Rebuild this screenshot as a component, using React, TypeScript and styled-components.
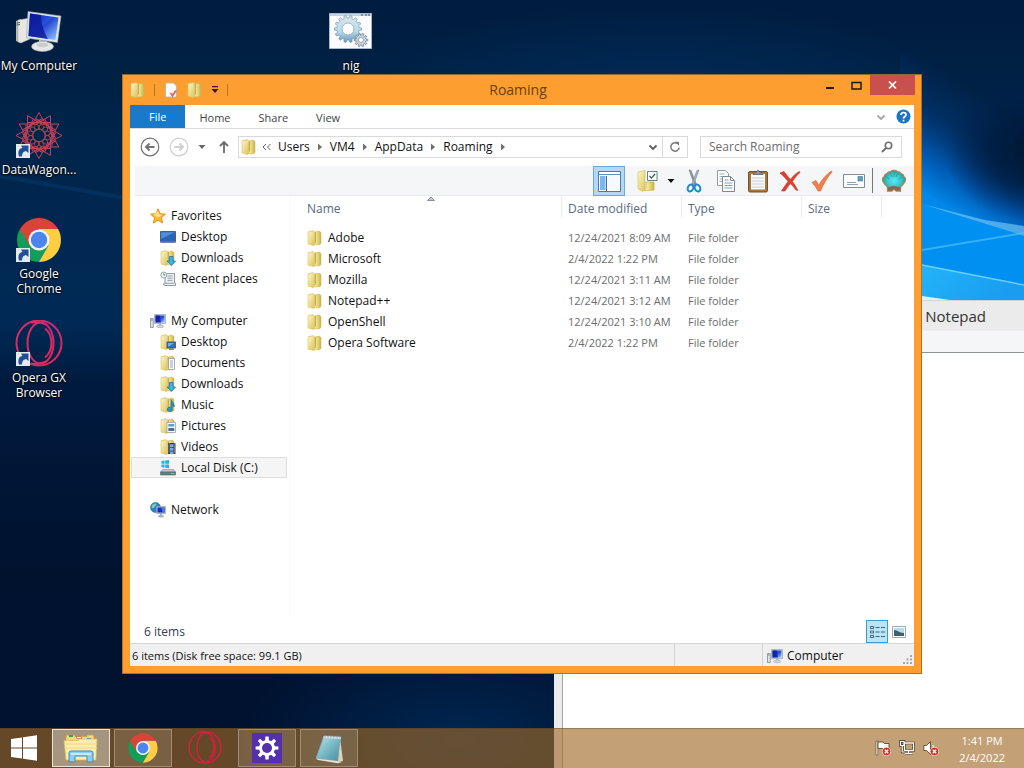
import React from "react";
import styled, { createGlobalStyle, css } from "styled-components";

const GlobalStyle = createGlobalStyle`
  *, *::before, *::after { box-sizing: border-box; }
  html, body, #root { height: 100%; }
  body {
    margin: 0;
    overflow: hidden;
    font-family: "Open Sans", "Noto Sans", sans-serif;
    font-size: 12px;
    line-height: 16px;
    color: #111;
  }
  button, input {
    font: inherit;
    color: inherit;
    border: 0;
    padding: 0;
    margin: 0;
    background: none;
  }
  svg { display: block; flex: none; }
  a { color: inherit; text-decoration: none; }
  ul, ol { list-style: none; margin: 0; padding: 0; }
`;

/* ---------- desktop ---------- */

const Desktop = styled.div`
  position: relative;
  display: flex;
  flex-direction: column;
  justify-content: space-between;
  min-height: 100vh;
  overflow: hidden;
  background: #00183a;
`;

const WallpaperSvg = styled.svg`
  position: absolute;
  inset: 0;
  width: 100%;
  height: 100%;
`;

const IconGrid = styled.ul`
  position: relative;
  display: grid;
  grid-template-columns: repeat(5, 78px);
  grid-auto-rows: 104px;
`;

const Shortcut = styled.li<{ $column: number }>`
  grid-column: ${(p) => p.$column};
  a {
    display: flex;
    flex-direction: column;
    align-items: center;
    gap: 2px;
    padding-top: 8px;
    color: #fff;
    line-height: 15px;
    text-align: center;
    text-shadow: 0 1px 2px #000, 0 0 2px #000;
  }
`;

/* ---------- window frames ---------- */

const NotepadWindow = styled.section`
  position: absolute;
  left: 554px;
  right: 0;
  top: 300px;
  bottom: 0;
  display: flex;
  flex-direction: column;
  background: #ebebeb;
  border-top: 1px solid #cfd6da;
  padding-left: 8px;
`;

const NotepadTitle = styled.header`
  display: flex;
  justify-content: flex-end;
  padding: 5px 38px 5px 0;
  font-size: 15px;
  line-height: 20px;
  color: #333;
`;

const NotepadMenu = styled.div`
  height: 22px;
  background: #f5f6f7;
  border-bottom: 1px solid #8d9298;
`;

const NotepadPage = styled.div`
  flex: 1;
  background: #fff;
  border-left: 1px solid #a5a5a5;
`;

const ExplorerWindow = styled.section`
  position: absolute;
  left: 122px;
  right: 102px;
  top: 74px;
  bottom: 94px;
  display: flex;
  flex-direction: column;
  padding: 0 7px 7px;
  border: 1px solid #b5701c;
  border-top-color: #8c6a3a;
  background: #fc9f30;
`;

const TitleBar = styled.header`
  position: relative;
  display: flex;
  justify-content: space-between;
  height: 30px;
  flex: none;
`;

const QuickAccess = styled.div`
  display: flex;
  align-items: center;
  gap: 8px;
`;

const QuickDivider = styled.span`
  width: 1px;
  height: 12px;
  background: #b87428;
`;

const IconButton = styled.button`
  display: flex;
  align-items: center;
  justify-content: center;
`;

const WindowTitle = styled.h1`
  position: absolute;
  inset: 0;
  margin: 0;
  padding: 5px 8px 5px 0;
  font-size: 14px;
  font-weight: 400;
  line-height: 20px;
  text-align: center;
  color: #6a3e10;
`;

const Caption = styled.div`
  position: relative;
  display: flex;
  align-items: flex-start;
  margin-right: -1px;
`;

const CaptionButton = styled.button<{ $close?: boolean }>`
  display: flex;
  align-items: center;
  justify-content: center;
  width: ${(p) => (p.$close ? 45 : 27)}px;
  height: 20px;
  background: ${(p) => (p.$close ? "#c9504e" : "transparent")};
`;

const Client = styled.div`
  display: flex;
  flex-direction: column;
  flex: 1;
  min-height: 0;
  background: #fff;
`;

/* ---------- ribbon, address, toolbar ---------- */

const TabRow = styled.nav`
  display: flex;
  align-items: stretch;
  height: 24px;
  border-bottom: 1px solid #dadbdc;
`;

const Tab = styled.button<{ $file?: boolean }>`
  padding: 2px 14px 0;
  font-size: 11px;
  color: #444;
  ${(p) =>
    p.$file &&
    css`
      padding: 0 19px;
      color: #fff;
      background: #1979ca;
    `}
`;

const TabTools = styled.div`
  display: flex;
  align-items: center;
  gap: 10px;
  margin-left: auto;
  padding-right: 3px;
`;

const AddressRow = styled.div`
  display: flex;
  align-items: center;
  gap: 12px;
  padding: 7px 12px 8px 10px;
`;

const NavButtons = styled.div`
  display: flex;
  align-items: center;
  gap: 9px;
`;

const AddressBox = styled.div`
  display: flex;
  align-items: center;
  flex: 1;
  height: 22px;
  min-width: 0;
  margin-left: -4px;
  padding-left: 2px;
  border: 1px solid #d9d9d9;
`;

const Crumbs = styled.ol`
  display: flex;
  align-items: center;
  flex: 1;
  padding-left: 5px;
  white-space: nowrap;
  li {
    display: flex;
    align-items: center;
  }
`;

const CrumbArrow = styled.span`
  display: flex;
  justify-content: center;
  width: 20px;
`;

const AddressButton = styled(IconButton)<{ $divided?: boolean }>`
  width: ${(p) => (p.$divided ? 25 : 18)}px;
  height: 20px;
  border-left: ${(p) => (p.$divided ? "1px solid #d9d9d9" : "0")};
`;

const SearchBox = styled.label`
  display: flex;
  align-items: center;
  width: 202px;
  height: 22px;
  padding: 0 8px;
  border: 1px solid #d9d9d9;
  input {
    flex: 1;
    min-width: 0;
    outline: 0;
  }
  input::placeholder {
    color: #6d6d6d;
    opacity: 1;
  }
`;

const Toolbar = styled.div`
  display: flex;
  align-items: center;
  justify-content: flex-end;
  height: 30px;
  flex: none;
  margin-left: 5px;
  padding-right: 4px;
  background: #f5f6f7;
  border-bottom: 1px solid #e8eaec;
`;

const ToolButton = styled(IconButton)<{ $active?: boolean; $narrow?: boolean }>`
  width: ${(p) => (p.$narrow ? 14 : 32)}px;
  height: 30px;
  ${(p) =>
    p.$active &&
    css`
      margin-right: 7px;
      background: #b5d6f5;
      border: 1px solid #6ba6dc;
    `}
`;

const ToolDivider = styled.span`
  width: 1px;
  height: 25px;
  margin: 0 5px 0 2px;
  background: #777;
`;

/* ---------- body ---------- */

const Body = styled.div`
  display: flex;
  flex: 1;
  min-height: 0;
`;

const Tree = styled.nav`
  width: 161px;
  flex: none;
  display: flex;
  flex-direction: column;
  gap: 21px;
  padding: 9px 3px 0 1px;
  border-right: 1px solid #fbfbfb;
`;

const TreeLink = styled.a<{ $root?: boolean; $selected?: boolean }>`
  display: flex;
  align-items: center;
  gap: 5px;
  height: 21px;
  padding-left: ${(p) => (p.$root ? 18 : 28)}px;
  border: 1px solid ${(p) => (p.$selected ? "#dedede" : "transparent")};
  background: ${(p) => (p.$selected ? "#f5f5f5" : "transparent")};
`;

const FilePane = styled.div`
  position: relative;
  flex: 1;
  min-width: 0;
  padding-left: 10px;
  overflow: hidden;
`;

const FileTable = styled.table`
  table-layout: fixed;
  border-collapse: separate;
  border-spacing: 0;
  width: 581px;
  th, td {
    padding: 0 6px;
    font-weight: 400;
    text-align: left;
    white-space: nowrap;
  }
  th {
    height: 22px;
    padding-top: 4px;
    border-right: 1px solid #e8edf3;
    color: #5a6a80;
  }
  td {
    height: 21px;
    font-size: 11px;
    color: #6d6d6d;
  }
  tbody tr:first-child td {
    height: 30px;
    padding-top: 9px;
  }
`;

const FileName = styled.a`
  display: flex;
  align-items: center;
  gap: 5px;
  font-size: 12px;
  color: #111;
`;

const SortMark = styled.span`
  position: absolute;
  left: 136px;
  top: 0;
`;

const DetailsRow = styled.div`
  display: flex;
  align-items: center;
  height: 23px;
  flex: none;
  padding: 0 4px 0 14px;
  color: #333f50;
`;

const ViewButtons = styled.div`
  display: flex;
  align-items: center;
  margin-left: auto;
`;

const ViewButton = styled(IconButton)<{ $active?: boolean }>`
  width: 22px;
  height: 23px;
  background: ${(p) => (p.$active ? "#b9e5f7" : "transparent")};
  border: 1px solid ${(p) => (p.$active ? "#3f9cc4" : "transparent")};
`;

const StatusBar = styled.footer`
  display: flex;
  align-items: stretch;
  height: 23px;
  flex: none;
  background: #f0f0f0;
  border-top: 1px solid #d7d7d7;
`;

const StatusCell = styled.div<{ $width?: number }>`
  display: flex;
  align-items: center;
  gap: 4px;
  padding: 2px 0 0 2px;
  font-size: 11px;
  flex: ${(p) => (p.$width ? `0 0 ${p.$width}px` : "1")};
  border-left: ${(p) => (p.$width ? "1px solid #d4d4d4" : "0")};
  white-space: nowrap;
`;

const PlaceCell = styled(StatusCell)`
  padding-left: 4px;
  font-size: 12px;
  > :last-child {
    margin-left: auto;
    align-self: flex-end;
  }
`;

/* ---------- taskbar ---------- */

const Taskbar = styled.footer`
  position: relative;
  display: flex;
  align-items: stretch;
  gap: 4px;
  height: 40px;
  padding: 0 19px 1px 0;
  background: rgba(160, 105, 36, 0.63);
  border-top: 1px solid rgba(80, 55, 25, 0.35);
`;

const StartButton = styled(IconButton)`
  width: 48px;
`;

const TaskButton = styled(IconButton)<{ $state?: "open" | "active" }>`
  width: 58px;
  border: 1px solid
    ${(p) => (p.$state === "active" ? "#eee5da" : p.$state ? "#a08c72" : "transparent")};
  background: ${(p) =>
    p.$state === "active"
      ? "linear-gradient(#a39480, #a8967f)"
      : p.$state
        ? "rgba(255, 245, 230, 0.14)"
        : "transparent"};
`;

const Tray = styled.div`
  display: flex;
  align-items: center;
  gap: 8px;
  margin-left: auto;
`;

const Clock = styled.time`
  margin-left: 12px;
  padding-top: 1px;
  font-size: 11px;
  color: #fff;
  text-align: center;
  line-height: 17px;
`;

/* ---------- drawings ---------- */

const Wallpaper = () => (
  <WallpaperSvg viewBox="0 0 1024 768" preserveAspectRatio="none" aria-hidden="true">
    <defs>
      <linearGradient id="night" x1="0" y1="0" x2="0" y2="1">
        <stop offset="0" stopColor="#001c3e" />
        <stop offset=".2" stopColor="#00254c" />
        <stop offset=".42" stopColor="#002a56" />
        <stop offset=".5" stopColor="#001a3e" />
        <stop offset=".75" stopColor="#00122e" />
        <stop offset="1" stopColor="#001230" />
      </linearGradient>
      <linearGradient id="beam" gradientUnits="userSpaceOnUse" x1="932" y1="64" x2="871" y2="159">
        <stop offset="0" stopColor="#003a7c" stopOpacity="0" />
        <stop offset=".35" stopColor="#003f86" stopOpacity=".4" />
        <stop offset=".7" stopColor="#0060c0" stopOpacity=".85" />
        <stop offset="1" stopColor="#0088ea" />
      </linearGradient>
      <radialGradient id="glow">
        <stop offset="0" stopColor="#00386e" stopOpacity=".55" />
        <stop offset="1" stopColor="#00386e" stopOpacity="0" />
      </radialGradient>
      <radialGradient id="shade">
        <stop offset="0" stopColor="#001632" />
        <stop offset=".5" stopColor="#001c40" stopOpacity=".8" />
        <stop offset="1" stopColor="#002050" stopOpacity="0" />
      </radialGradient>
      <linearGradient id="pale" x1="0" y1="0" x2="1" y2=".3">
        <stop offset="0" stopColor="#22b4f8" />
        <stop offset="1" stopColor="#1a9cf0" />
      </linearGradient>
      <linearGradient id="folderBack" x1="0" y1="0" x2="1" y2="0">
        <stop offset="0" stopColor="#faf4bc" />
        <stop offset=".5" stopColor="#ecdf86" />
        <stop offset="1" stopColor="#ccb24a" />
      </linearGradient>
      <linearGradient id="folderFront" x1="0" y1="0" x2="1" y2="1">
        <stop offset="0" stopColor="#fdf8cc" />
        <stop offset="1" stopColor="#dcc258" />
      </linearGradient>
      <linearGradient id="screen" x1="0" y1="0" x2="1" y2="1">
        <stop offset="0" stopColor="#0b1fa8" />
        <stop offset=".45" stopColor="#2a50dc" />
        <stop offset=".5" stopColor="#2448d0" />
        <stop offset="1" stopColor="#9cd0ff" />
      </linearGradient>
      <linearGradient id="operaRing" x1="0" y1="0" x2="1" y2="1">
        <stop offset="0" stopColor="#e8285c" />
        <stop offset=".5" stopColor="#c82c74" />
        <stop offset="1" stopColor="#f02450" />
      </linearGradient>
      <radialGradient id="shell">
        <stop offset="0" stopColor="#58ecec" />
        <stop offset=".6" stopColor="#38c8d0" />
        <stop offset="1" stopColor="#2a9c98" />
      </radialGradient>
      <linearGradient id="gearFill" x1="0" y1="0" x2="0" y2="1">
        <stop offset="0" stopColor="#dde6ee" />
        <stop offset=".6" stopColor="#b4dcea" />
        <stop offset="1" stopColor="#6a93c0" />
      </linearGradient>
      <linearGradient id="pad" x1="0" y1="0" x2="1" y2="1">
        <stop offset="0" stopColor="#b8e6ec" />
        <stop offset="1" stopColor="#3f8ca0" />
      </linearGradient>
    </defs>
    <rect width="1024" height="768" fill="url(#night)" />
    <ellipse cx="660" cy="110" rx="320" ry="110" fill="url(#glow)" />
    <ellipse cx="460" cy="740" rx="220" ry="110" fill="url(#glow)" />
    <path d="M0 176L124 198" stroke="#0a4278" strokeWidth="4" opacity=".35" />
    <path d="M900 0H1024V300H900Z" fill="url(#beam)" />
    <ellipse cx="1034" cy="150" rx="90" ry="72" fill="url(#shade)" />
    <path d="M900 198L922 204L1024 236V300H900Z" fill="#0090f2" />
    <path d="M922 204L1024 236V226L985 220Z" fill="#7fd0fb" opacity=".6" />
    <path d="M922 250L1024 233" stroke="#4cc0fa" strokeWidth="2" opacity=".7" />
    <path d="M922 265L1024 285V300H922Z" fill="url(#pale)" />
    <path d="M922 265L1024 285" stroke="#6cd0fb" strokeWidth="1.5" />
    <path d="M922 296L950 300H922Z" fill="#d8f4ff" />
  </WallpaperSvg>
);

const FolderShape = () => (
  <>
    <path d="M1.5 1.5L6 .8L7 2H12.5V14H1.5Z" fill="url(#folderBack)" stroke="#dcc873" strokeWidth=".6" />
    <path d="M8.5 2L12 1L14 2.5V13.5L12.5 14.8H5.5L8.5 12.5Z" fill="url(#folderBack)" stroke="#c8b052" strokeWidth=".5" />
    <path d="M7.5 2.8L9 2V12L7.5 13Z" fill="#a8943c" opacity=".5" />
    <path d="M1 2L6.5 .8L7.5 2V14.5L6.5 15.5L1 14Z" fill="url(#folderFront)" stroke="#dcc867" strokeWidth=".6" />
  </>
);

type Badge = "arrow" | "screen" | "doc" | "note" | "photo" | "film";

const Folder = ({ badge }: { badge?: Badge }) => (
  <svg width="16" height="16" viewBox="0 0 16 16" aria-hidden="true">
    <FolderShape />
    {badge === "arrow" && (
      <path d="M9.5 6.5h3.5v4.5h2.5l-4.2 4.5-4.2-4.5h2.4z" fill="#3fb4e0" stroke="#1878ac" strokeWidth=".8" />
    )}
    {badge === "screen" && (
      <>
        <rect x="7" y="8" width="8.5" height="6" fill="#2d70c0" stroke="#38506c" strokeWidth=".8" />
        <path d="M8 9h6l-6 4z" fill="#6cb0ea" />
        <path d="M9 15.3h5" stroke="#5d6c7c" />
      </>
    )}
    {badge === "doc" && (
      <>
        <path d="M8.5 3.5h6v11h-6z" fill="#fff" stroke="#9298a4" strokeWidth=".8" />
        <path d="M10 6h3M10 8h3M10 10h3M10 12h3" stroke="#7480b0" strokeWidth=".8" />
      </>
    )}
    {badge === "note" && (
      <path d="M11 2.5c.6 2.3 3.8 3.4 3.2 7.5-.6-1.800-1.200-2.200-1.800-2.600v5a2.600 2.200 0 1 1-1.600-2z" fill="#2b96cc" stroke="#176494" strokeWidth=".6" />
    )}
    {badge === "photo" && (
      <>
        <path d="M7 4.5h8.5v10H7z" fill="#fff" stroke="#98a2ac" strokeWidth=".8" />
        <path d="M8.3 6h6v2.6h-6z" fill="#5aa4d4" />
        <path d="M8.3 10h6v3h-6z" fill="#4c7290" />
      </>
    )}
    {badge === "film" && (
      <>
        <path d="M8 4h7.5v11H8z" fill="#333c52" />
        <path d="M10 5.2h3.5v3H10zM10 9h3.5v2.8H10zM10 12.6h3.5V15H10z" fill="#80a4dc" />
        <path d="M9 4.5v10M14.6 4.5v10" stroke="#e8ecf2" strokeWidth=".7" strokeDasharray="1 1" />
      </>
    )}
  </svg>
);

const SmallComputer = () => (
  <svg width="16" height="16" viewBox="0 0 16 16" aria-hidden="true">
    <path d="M.5 5.5h2.8v9H.5z" fill="#dfe3e6" stroke="#7c8a94" strokeWidth=".8" />
    <path d="M1.2 7h1.4" stroke="#5d7c50" />
    <path d="M4.5 1.5h11v9h-11z" fill="#d6dce4" stroke="#8a94a8" strokeWidth=".6" />
    <path d="M5.5 2.5h9v7h-9z" fill="url(#screen)" />
    <path d="M5.5 2.5h4l1.5 7H5.500z" fill="#101c9c" opacity=".8" />
    <path d="M9 10.5h2.4v2H9z" fill="#aeb4c2" />
    <ellipse cx="10.2" cy="13.4" rx="3.6" ry="1.3" fill="#d6dae2" stroke="#8c94a4" strokeWidth=".5" />
  </svg>
);

const Star = () => (
  <svg width="16" height="16" viewBox="0 0 16 16" aria-hidden="true">
    <path d="M8 .8l2.100 4.900 5.300.5-4 3.500 1.300 5.300L8 12.200 3.300 15l1.300-5.300-4-3.500 5.300-.5z" fill="#fdb92e" stroke="#e08516" strokeWidth=".9" />
    <path d="M8 3l1.400 3.500 3.200.3L8 9.5 3.600 7z" fill="#ffe08a" />
  </svg>
);

const DesktopIcon = () => (
  <svg width="16" height="16" viewBox="0 0 16 16" aria-hidden="true">
    <path d="M.5 2.5h15v10.5H.5z" fill="#2a64b4" stroke="#44566c" strokeWidth=".9" />
    <path d="M1.2 3.2h13.4L1.2 10z" fill="#4d90d8" />
    <path d="M.5 12h15v1.8H.5z" fill="#5a7890" />
  </svg>
);

const RecentIcon = () => (
  <svg width="16" height="16" viewBox="0 0 16 16" aria-hidden="true">
    <path d="M5 2.5h9.5v9.5h1v2.5H4.5L3 13h2z" fill="#eef0f2" stroke="#8a9299" strokeWidth=".9" />
    <path d="M7.5 5h5M7.5 7.2h5M7.5 9.4h5M5 12.2h9" stroke="#8a949e" strokeWidth=".9" />
    <circle cx="3.8" cy="4" r="3" fill="#eaf4f8" stroke="#93a0a8" strokeWidth=".9" />
    <path d="M3.8 2.2V4h1.5" stroke="#50606c" fill="none" strokeWidth=".8" />
  </svg>
);

const DriveIcon = () => (
  <svg width="16" height="16" viewBox="0 0 16 16" aria-hidden="true">
    <path d="M1.5 1l3-.4v3.2h-3zM5.2.5L9 0v3.8H5.2zM1.5 4.5h3v3.2l-3-.4zM5.2 4.5H9v3.8l-3.8-.5z" fill="#1fb4e4" />
    <path d="M2.5 9.5h11l2 2.5H.5z" fill="#c0ccce" stroke="#7b8b90" strokeWidth=".6" />
    <path d="M.5 12h15v3H.5z" fill="#5f8086" stroke="#45636a" strokeWidth=".6" />
    <path d="M11 13.5h3" stroke="#5ee07c" />
  </svg>
);

const NetworkIcon = () => (
  <svg width="16" height="16" viewBox="0 0 16 16" aria-hidden="true">
    <circle cx="5.5" cy="5.5" r="5" fill="#2c80cc" stroke="#1d5690" strokeWidth=".5" />
    <path d="M2 3.400c2-2.400 4-2 4.600-1.400-.2 2-2 1.600-2.300 3.500-1 .3-1.800 1-2.800.6z" fill="#7fd49c" />
    <path d="M6.500 4.5h9v7h-9z" fill="#d8dee8" stroke="#8690a4" strokeWidth=".6" />
    <path d="M7.4 5.4h7.2v5.2H7.4z" fill="#1630b4" />
    <path d="M11 5.400h3.600v5.200h-2z" fill="#4878e4" />
    <path d="M10 11.500h2v2h-2z" fill="#9ea6b8" />
    <ellipse cx="11" cy="14.2" rx="3" ry="1.2" fill="#9fb0c8" />
  </svg>
);

const LinkArrow = () => (
  <>
    <path d="M1 32h14v14H1z" fill="#e2ebf4" />
    <path d="M4 44.500C2.500 39.500 4 36.500 7.500 36L6 33.500H13.500V41L11 39C8 39.500 7 41.500 7 44.500Z" fill="#234f94" />
  </>
);

const BigComputer = () => (
  <svg width="48" height="48" viewBox="0 0 48 48" aria-hidden="true">
    <path d="M1 13L6 11V35L1 33Z" fill="#b8bab8" />
    <path d="M3 12L15 10V31L6 35L3 34Z" fill="#e8e8e2" stroke="#9c9e9e" strokeWidth=".5" />
    <path d="M1.500 15L5 14.500M1.500 17L5 16.500" stroke="#555c60" />
    <path d="M13 3.500L46 8L42.500 34.500L11.500 30Z" fill="#dfe4ea" stroke="#9aa4ae" strokeWidth=".6" />
    <path d="M15 5.500L43.500 9.500L40.500 32L13.500 28Z" fill="url(#screen)" />
    <path d="M15 5.500L26 7C26 15 29 24 33 31L13.500 28Z" fill="#0c1898" opacity=".8" />
    <path d="M24 32L32 33V38H24Z" fill="#c8ccd0" />
    <ellipse cx="27.500" cy="38.500" rx="11" ry="5" fill="#e6e8e6" stroke="#a4a8aa" strokeWidth=".6" />
    <ellipse cx="27.500" cy="37" rx="6" ry="2.200" fill="#c8cccc" />
  </svg>
);

const points = Array.from({ length: 12 }, (_, i) => i * 30);

const Spirograph = () => (
  <svg width="48" height="48" viewBox="0 0 48 48" aria-hidden="true">
    <g transform="translate(24 23.500)" fill="none" stroke="#c8405c">
      {points.map((a) => (
        <g key={a} transform={`rotate(${a})`}>
          <path d="M0 -23L8 -9M0 -23L-8 -9M-11 -13L11 -13" strokeWidth="1" />
          <path d="M0 -13C6 -11 6 -5 0 -6C-6 -5 -6 -11 0 -13" strokeWidth="1" stroke="#b04050" />
        </g>
      ))}
    </g>
    <LinkArrow />
  </svg>
);

const ChromeIcon = ({ size = 48, linked }: { size?: number; linked?: boolean }) => (
  <svg width={size} height={size} viewBox="0 0 48 48" aria-hidden="true">
    <path d="M24 24V13H43A22 22 0 0 1 24 46Z" fill="#fdce42" />
    <path d="M24 24L33.500 29.500L24 46A22 22 0 0 1 5 13Z" fill="#129d58" />
    <path d="M24 13H43.100A22 22 0 0 0 5 13L14.500 29.500Z" fill="#da4437" />
    <circle cx="24" cy="24" r="10.5" fill="#f4f4f4" />
    <circle cx="24" cy="24" r="8.2" fill="#4a86ee" />
    {linked && <LinkArrow />}
  </svg>
);

const OperaIcon = ({ size = 48, linked }: { size?: number; linked?: boolean }) => (
  <svg width={size} height={size} viewBox="0 0 48 48" aria-hidden="true">
    <g fill="none" stroke={linked ? "url(#operaRing)" : "#d41f3c"} strokeWidth="2">
      <circle cx="24" cy="23" r="22.5" />
      <ellipse cx="25.5" cy="23" rx="13" ry="20.5" />
      <path d="M30 8.500C38.500 15 38.500 31 30 37.500" />
      <path d="M16 2.500C21 1.500 25 1.500 31 4.500M16 43.500c5 1 9 1 15-2" />
    </g>
    {linked && <LinkArrow />}
  </svg>
);

const gearPath = (cx: number, cy: number, inner: number, outer: number, teeth: number) => {
  const step = (Math.PI * 2) / teeth;
  let d = "";
  for (let i = 0; i < teeth; i++) {
    [[-0.3, inner], [-0.18, outer], [0.18, outer], [0.3, inner]].forEach(([o, r], k) => {
      const a = (i + o) * step;
      d += `${i + k === 0 ? "M" : "L"}${(cx + Math.cos(a) * r).toFixed(2)} ${(cy + Math.sin(a) * r).toFixed(2)}`;
    });
  }
  return d + "Z";
};

const BatchIcon = () => (
  <svg width="48" height="48" viewBox="0 0 48 48" aria-hidden="true">
    <path d="M2.5 5.5h42v35h-42z" fill="#fafcfd" stroke="#a9b8cc" />
    <path d="M3 6h41v2H3z" fill="#c3d0e4" />
    <path d="M34 7h2M38 7h2M41 7h2" stroke="#42526c" />
    <path d={gearPath(21, 21, 11, 13.5, 14)} fill="url(#gearFill)" stroke="#7895ac" strokeWidth=".7" />
    <circle cx="21" cy="21" r="6" fill="#fff" stroke="#8ca4b4" strokeWidth=".8" />
    <path d={gearPath(34, 32, 5, 6.8, 10)} fill="#c8d2dc" stroke="#6c7c8c" strokeWidth=".7" />
    <circle cx="34" cy="32" r="2.5" fill="#fff" stroke="#7c8c9c" strokeWidth=".7" />
  </svg>
);

const BackArrow = ({ flip }: { flip?: boolean }) => (
  <svg width="20" height="20" viewBox="0 0 20 20" fill="none" stroke={flip ? "#cfcfcf" : "#727272"} aria-hidden="true">
    <circle cx="10" cy="10" r="8.8" strokeWidth="1.2" />
    <path d={flip ? "M5.500 10h8.500M10.500 6.500L14 10l-3.500 3.500" : "M14.500 10H6M9.500 6.500L6 10l3.500 3.500"} strokeWidth="1.9" />
  </svg>
);

const Caret = ({ color = "#666" }: { color?: string }) => (
  <svg width="8" height="8" viewBox="0 0 8 8" aria-hidden="true">
    <path d="M.5 2h7L4 6z" fill={color} />
  </svg>
);

const Chevron = ({ color }: { color: string }) => (
  <svg width="10" height="10" viewBox="0 0 10 10" fill="none" stroke={color} strokeWidth="1.8" aria-hidden="true">
    <path d="M1.500 3.500L5 7L8.500 3.500" />
  </svg>
);

const RightArrow = () => (
  <svg width="6" height="8" viewBox="0 0 6 8" aria-hidden="true">
    <path d="M1 .5v7L5 4z" fill="#6e6e6e" />
  </svg>
);

const PaneIcon = () => (
  <svg width="26" height="26" viewBox="0 0 26 26" aria-hidden="true">
    <path d="M2.500 3.500h22v20h-22z" fill="#fff" stroke="#4a7ba8" />
    <path d="M3 6.500h21" stroke="#5d8cb4" />
    <path d="M4 8h5.500v14H4z" fill="#7db6ea" />
    <path d="M10.500 8v15" stroke="#3f6c98" />
    <path d="M12 8h11v14H12z" fill="#f4faff" />
  </svg>
);

const SelectIcon = () => (
  <svg width="22" height="24" viewBox="0 0 22 24" aria-hidden="true">
    <path d="M1 3l7-1.500V20l-2 2.500L1 20z" fill="url(#folderFront)" stroke="#d8bd58" strokeWidth=".6" />
    <path d="M9 13h8v8l-10 .8L9 19z" fill="url(#folderBack)" stroke="#c4a640" strokeWidth=".6" />
    <path d="M10.500 2.500h9.500v9h-9.500z" fill="#f6fbfb" stroke="#6a8484" />
    <path d="M12.500 7l2 2.200L18 5" fill="none" stroke="#3a5c5c" strokeWidth="1.2" />
  </svg>
);

const ScissorsIcon = () => (
  <svg width="16" height="24" viewBox="0 0 16 24" fill="none" aria-hidden="true">
    <path d="M3 1l2 .5 5.500 14-2 .5z" fill="#8a98a4" stroke="#66747e" strokeWidth=".5" />
    <path d="M13 1l-2 .5-5.500 14 2 .5z" fill="#aab6c0" stroke="#66747e" strokeWidth=".5" />
    <ellipse cx="4.5" cy="19" rx="2.7" ry="3.600" stroke="#1e8cc4" strokeWidth="2" transform="rotate(25 4.500 19)" />
    <ellipse cx="11.5" cy="19" rx="2.7" ry="3.600" stroke="#1e8cc4" strokeWidth="2" transform="rotate(-25 11.500 19)" />
  </svg>
);

const CopyIcon = () => (
  <svg width="20" height="24" viewBox="0 0 20 24" aria-hidden="true">
    <path d="M1.500 1.500h8l3 3v12h-11z" fill="#fff" stroke="#8f9aa4" />
    <path d="M3.500 5h5M3.500 7.500h6M3.500 10h4M3.500 12.500h4" stroke="#9db0c0" />
    <path d="M6.500 7.500h8l4 4v11h-12z" fill="#fff" stroke="#7c8a96" />
    <path d="M14.500 7.500v4h4" fill="none" stroke="#7c8a96" />
    <path d="M8.500 11h4M8.500 14h8M8.500 16.500h8M8.500 19h8" stroke="#7fa0b8" />
  </svg>
);

const ClipboardIcon = () => (
  <svg width="22" height="24" viewBox="0 0 22 24" aria-hidden="true">
    <rect x="1.5" y="2.5" width="19" height="20.5" rx="1.5" fill="#a8743c" stroke="#76502a" />
    <path d="M4 5h14v15.500H4z" fill="#fbfbf9" />
    <path d="M5 9h12M5 12h12M5 15h12M5 18h12" stroke="#c4ccd2" />
    <path d="M6 5.500l2-2.500h1.500a1.500 1.500 0 0 1 3 0H14l2 2.500z" fill="#8f9498" stroke="#4c5054" strokeWidth=".7" />
  </svg>
);

const DeleteIcon = () => (
  <svg width="22" height="22" viewBox="0 0 22 22" aria-hidden="true">
    <path d="M1 3l4-1.500C7 4 9 7 11.500 9.500 14 6 17 3 20.500 1.500l.5 1C18 5 15.500 8 13.500 11.500c2 3 4 6 5.500 9l-2-.5c-2-2.500-3.700-4.700-5.500-6.500-2.500 3-4 5-5.500 7.500H2.500C4.500 17.500 7 14.500 9 11.500 6.500 8 4 5.500 1 3z" fill="#dc4030" stroke="#c43828" strokeWidth=".6" />
  </svg>
);

const CheckIcon = () => (
  <svg width="22" height="22" viewBox="0 0 22 22" aria-hidden="true">
    <path d="M1 12.500l4-2c1 1.500 2 3.500 2.700 5C10.500 10 15 4.500 20.500 1l.5 1c-4.500 5-8.500 12-11.500 19H7C5.500 18 3.500 15 1 12.500z" fill="#f0804c" stroke="#d8683a" strokeWidth=".7" />
  </svg>
);

const CardIcon = () => (
  <svg width="24" height="16" viewBox="0 0 24 16" aria-hidden="true">
    <path d="M1.500 1.500h21v13h-21z" fill="#fdfefe" stroke="#7d8c98" />
    <path d="M16 3.500h4.500V8H16z" fill="#5aa0cc" stroke="#44708c" strokeWidth=".6" />
    <path d="M5 9.500h9M5 11.500h11" stroke="#8ea0ae" />
  </svg>
);

const ShellIcon = () => (
  <svg width="26" height="24" viewBox="0 0 26 24" aria-hidden="true">
    <path d="M13 1.500c2 0 3 .7 3.500 1.200 1.500 0 3 .8 3.600 2 1.700.5 2.700 1.600 2.900 3.100 1.300 1 1.800 2.700 1.200 4.200-.7 2-2.200 3.700-4.700 6v4h-4.300L13 20l-2.200 2H6.500v-4c-2.500-2.300-4-4-4.700-6-.6-1.500-.1-3.200 1.200-4.200.2-1.500 1.200-2.600 2.900-3.100.6-1.200 2.100-2 3.600-2C10 2.200 11 1.500 13 1.500z" fill="url(#shell)" stroke="#a88458" strokeWidth="1.300" />
    <path d="M13 8V3.500M11 8L9.500 4.500M15 8L16.500 4.500M8.500 10L5 7.500M17.500 10L21 7.500" stroke="#2c8c98" strokeWidth=".7" />
    <path d="M7 18.500C11 16.500 15 16.500 19 18.500V21.500H15L13 19.500L11 21.500H7Z" fill="#8c6450" />
  </svg>
);

const ExplorerIcon = () => (
  <svg width="36" height="32" viewBox="0 0 36 32" aria-hidden="true">
    <path d="M3 5l1-2h7l1 1.500h12V3h6l1 2v10H3z" fill="#f2d97a" stroke="#c9a53c" strokeWidth=".7" />
    <path d="M6 3h4v2H6z" fill="#3da04c" />
    <path d="M13 4.500h5l1 2h-5z" fill="#e9f2fa" stroke="#c04838" strokeWidth=".6" />
    <path d="M24 6h4v2h-4z" fill="#4a88c4" />
    <path d="M1 8.500h14l2-1.500h17l-1 21H3z" fill="#fbedaa" stroke="#d8b850" strokeWidth=".7" />
    <path d="M1 12h33M2 16h32" stroke="#f0d880" />
    <path d="M6 30V21a2 2 0 0 1 2-2h20a2 2 0 0 1 2 2v9h-6v-6H12v6z" fill="#8ccdf2" stroke="#3a8cc4" />
    <path d="M8 22h20" stroke="#dcf2ff" strokeWidth="1.5" />
  </svg>
);

const SettingsIcon = () => (
  <svg width="30" height="30" viewBox="0 0 30 30" aria-hidden="true">
    <path d="M0 0h30v30H0z" fill="#5530ac" />
    <path d={gearPath(15, 15, 8, 11.5, 8)} fill="#fff" />
    <circle cx="15" cy="15" r="5" fill="#5530ac" />
  </svg>
);

const NotepadIcon = () => (
  <svg width="32" height="32" viewBox="0 0 32 32" aria-hidden="true">
    <path d="M27 5l3 24-5 1z" fill="#d8d4c4" />
    <path d="M11 4l17 1-4 24L3 26.500z" fill="url(#pad)" stroke="#7cacb4" strokeWidth=".7" />
    <path d="M3 26.500l21 2.500 5 1-4 1.200L5 28z" fill="#e8e4d4" />
    <path d="M11 4l17 1v2L10 6z" fill="#e4e8ea" />
    <path d="M12 3v3M15 3v3M18 3.200v3M21 3.400v3M24 3.600v3M27 3.800v3" stroke="#84929a" strokeWidth=".8" />
  </svg>
);

const WindowsLogo = () => (
  <svg width="28" height="26" viewBox="0 0 28 26" aria-hidden="true">
    <path d="M1 4L12 2.400V12.400H1ZM13 2.200L27 .2V12.400H13ZM1 13.500H12V23.500L1 21.900ZM13 13.500H27V25.700L13 23.700Z" fill="#fff" />
  </svg>
);

const RedCross = () => (
  <>
    <circle cx="11.5" cy="11.5" r="4.3" fill="#cf3030" stroke="#fbe6dc" strokeWidth=".8" />
    <path d="M9.800 9.800l3.400 3.400M13.200 9.800l-3.400 3.400" stroke="#fff" strokeWidth="1.300" />
  </>
);

const FlagIcon = () => (
  <svg width="16" height="16" viewBox="0 0 16 16" aria-hidden="true">
    <path d="M1 1h1.800v14H1z" fill="#fff" stroke="#4c3820" strokeWidth=".6" />
    <path d="M3 2h5l1.500 1.500H14V10H8.500L7.500 8.500H3z" fill="#fdfaf4" stroke="#4c3820" strokeWidth=".8" />
    <RedCross />
  </svg>
);

const WiredIcon = () => (
  <svg width="16" height="16" viewBox="0 0 16 16" fill="none" aria-hidden="true">
    <path d="M5.500 3h9v7.500h-9zM9.500 10.500V13M6 13.500h7.500" stroke="#40301c" strokeWidth="2.600" />
    <path d="M1.500 1.500h3.500v4H1.500zM3.200 5.500V12h2" stroke="#40301c" strokeWidth="2.600" />
    <path d="M5.500 3h9v7.500h-9zM9.500 10.500V13M6 13.500h7.500" stroke="#fff" strokeWidth="1.300" />
    <path d="M1.500 1.500h3.500v4H1.500zM3.200 5.500V12h2" stroke="#fff" strokeWidth="1.200" />
  </svg>
);

const SoundIcon = () => (
  <svg width="16" height="16" viewBox="0 0 16 16" aria-hidden="true">
    <path d="M.8 5.500h2.700L7.500 1.500v13L3.500 10.500H.8z" fill="#fff" stroke="#4c3820" strokeWidth=".8" />
    <path d="M9.500 5c1 1.500 1 2.500 1 3" fill="none" stroke="#fff" />
    <RedCross />
  </svg>
);

/* ---------- data ---------- */

const shortcuts = [
  { label: "My Computer", column: 1, icon: <BigComputer /> },
  { label: "nig", column: 5, icon: <BatchIcon /> },
  { label: "DataWagon...", column: 1, icon: <Spirograph /> },
  { label: "Google Chrome", column: 1, icon: <ChromeIcon linked /> },
  { label: "Opera GX Browser", column: 1, icon: <OperaIcon linked /> },
];

type TreeItem = { label: string; icon: React.ReactNode; selected?: boolean };
type TreeGroup = { label: string; icon: React.ReactNode; items: TreeItem[] };

const tree: TreeGroup[] = [
  {
    label: "Favorites",
    icon: <Star />,
    items: [
      { label: "Desktop", icon: <DesktopIcon /> },
      { label: "Downloads", icon: <Folder badge="arrow" /> },
      { label: "Recent places", icon: <RecentIcon /> },
    ],
  },
  {
    label: "My Computer",
    icon: <SmallComputer />,
    items: [
      { label: "Desktop", icon: <Folder badge="screen" /> },
      { label: "Documents", icon: <Folder badge="doc" /> },
      { label: "Downloads", icon: <Folder badge="arrow" /> },
      { label: "Music", icon: <Folder badge="note" /> },
      { label: "Pictures", icon: <Folder badge="photo" /> },
      { label: "Videos", icon: <Folder badge="film" /> },
      { label: "Local Disk (C:)", icon: <DriveIcon />, selected: true },
    ],
  },
  { label: "Network", icon: <NetworkIcon />, items: [] },
];

const files = [
  ["Adobe", "12/24/2021 8:09 AM"],
  ["Microsoft", "2/4/2022 1:22 PM"],
  ["Mozilla", "12/24/2021 3:11 AM"],
  ["Notepad++", "12/24/2021 3:12 AM"],
  ["OpenShell", "12/24/2021 3:10 AM"],
  ["Opera Software", "2/4/2022 1:22 PM"],
];

const NameCol = styled.col`
  width: 261px;
`;
const WideCol = styled.col`
  width: 120px;
`;
const SizeCol = styled.col`
  width: 80px;
`;

/* ---------- page ---------- */

const Explorer = () => (
  <ExplorerWindow aria-label="Roaming">
    <TitleBar>
      <WindowTitle>Roaming</WindowTitle>
      <QuickAccess>
        <Folder />
        <QuickDivider />
        <IconButton aria-label="Properties">
          <svg width="16" height="16" viewBox="0 0 16 16">
            <path d="M2.500 1h8l3 3v11h-11z" fill="#fff" stroke="#b4aca4" strokeWidth=".8" />
            <path d="M7.500 11l2 2.500L13 8.500" fill="none" stroke="#dc6a5c" strokeWidth="2" />
          </svg>
        </IconButton>
        <IconButton aria-label="New folder">
          <Folder />
        </IconButton>
        <IconButton aria-label="Customize">
          <svg width="8" height="8" viewBox="0 0 8 8">
            <path d="M1 0h6v1.200H1zM.5 3h7L4 7z" fill="#3c0c08" />
          </svg>
        </IconButton>
        <QuickDivider />
      </QuickAccess>
      <Caption>
        <CaptionButton aria-label="Minimize">
          <svg width="8" height="8" viewBox="0 0 8 8">
            <path d="M0 6h8v2H0z" fill="#2b1600" />
          </svg>
        </CaptionButton>
        <CaptionButton aria-label="Maximize">
          <svg width="11" height="9" viewBox="0 0 11 9">
            <path d="M1 1.500h9v6.500H1z" fill="none" stroke="#2b1600" strokeWidth="1.500" />
          </svg>
        </CaptionButton>
        <CaptionButton $close aria-label="Close">
          <svg width="9" height="8" viewBox="0 0 9 8">
            <path d="M1 .5l7 7M8 .5l-7 7" stroke="#fff" strokeWidth="1.700" />
          </svg>
        </CaptionButton>
      </Caption>
    </TitleBar>
    <Client>
      <TabRow>
        <Tab $file>File</Tab>
        <Tab>Home</Tab>
        <Tab>Share</Tab>
        <Tab>View</Tab>
        <TabTools>
          <IconButton aria-label="Expand the ribbon">
            <Chevron color="#a5a5a5" />
          </IconButton>
          <IconButton aria-label="Help">
            <svg width="15" height="15" viewBox="0 0 15 15">
              <circle cx="7.5" cy="7.5" r="7" fill="#1b74c8" />
              <path d="M5 6c0-3.300 5-3.300 5-.3C10 7.500 7.500 7.500 7.500 9.500M7.500 10.800v1.700" fill="none" stroke="#fff" strokeWidth="1.700" />
            </svg>
          </IconButton>
        </TabTools>
      </TabRow>
      <AddressRow>
        <NavButtons>
          <IconButton aria-label="Back">
            <BackArrow />
          </IconButton>
          <IconButton aria-label="Forward">
            <BackArrow flip />
          </IconButton>
          <IconButton aria-label="Recent locations">
            <Caret />
          </IconButton>
        </NavButtons>
        <IconButton aria-label="Up">
          <svg width="12" height="14" viewBox="0 0 12 14" fill="none" stroke="#6a6a6a" strokeWidth="1.800">
            <path d="M6 13V2M2 6L6 2l4 4" />
          </svg>
        </IconButton>
        <AddressBox>
          <Folder />
          <Crumbs>
            <li>
              <svg width="16" height="8" viewBox="0 0 16 8" fill="none" stroke="#666" aria-hidden="true">
                <path d="M4 1L1 4l3 3M8.500 1l-3 3 3 3" />
              </svg>
            </li>
            {["Users", "VM4", "AppData", "Roaming"].map((name) => (
              <li key={name}>
                <a href="#path">{name}</a>
                <CrumbArrow>
                  <RightArrow />
                </CrumbArrow>
              </li>
            ))}
          </Crumbs>
          <AddressButton aria-label="Previous locations">
            <Chevron color="#5e5e5e" />
          </AddressButton>
          <AddressButton $divided aria-label="Refresh">
            <svg width="12" height="12" viewBox="0 0 12 12" fill="none" stroke="#7a7a7a" strokeWidth="1.500">
              <path d="M8 2.300A4.200 4.200 0 1 0 10.200 6.500" />
              <path d="M6 .8h4v4z" fill="#7a7a7a" stroke="none" />
            </svg>
          </AddressButton>
        </AddressBox>
        <SearchBox>
          <input type="text" placeholder="Search Roaming" aria-label="Search Roaming" />
          <svg width="12" height="12" viewBox="0 0 12 12" fill="none" stroke="#707070" aria-hidden="true">
            <circle cx="7.5" cy="4.5" r="3.2" strokeWidth="1.600" />
            <path d="M5 7L1 11" strokeWidth="2" />
          </svg>
        </SearchBox>
      </AddressRow>
      <Toolbar role="toolbar" aria-label="Commands">
        <ToolButton $active aria-label="Navigation pane"><PaneIcon /></ToolButton>
        <ToolButton aria-label="Select"><SelectIcon /></ToolButton>
        <ToolButton $narrow aria-label="More selection commands"><Caret color="#111" /></ToolButton>
        <ToolButton aria-label="Cut"><ScissorsIcon /></ToolButton>
        <ToolButton aria-label="Copy"><CopyIcon /></ToolButton>
        <ToolButton aria-label="Paste"><ClipboardIcon /></ToolButton>
        <ToolButton aria-label="Delete"><DeleteIcon /></ToolButton>
        <ToolButton aria-label="Properties"><CheckIcon /></ToolButton>
        <ToolButton aria-label="Rename"><CardIcon /></ToolButton>
        <ToolDivider />
        <ToolButton aria-label="Shell settings"><ShellIcon /></ToolButton>
      </Toolbar>
      <Body>
        <Tree aria-label="Folders">
          {tree.map((group) => (
            <div key={group.label}>
              <TreeLink $root href="#folder">
                {group.icon}
                {group.label}
              </TreeLink>
              {group.items.map((item) => (
                <TreeLink key={item.label} href="#folder" $selected={item.selected}>
                  {item.icon}
                  {item.label}
                </TreeLink>
              ))}
            </div>
          ))}
        </Tree>
        <FilePane>
          <SortMark>
            <svg width="8" height="5" viewBox="0 0 8 5" aria-hidden="true">
              <path d="M.5 4.500L4 1l3.500 3.500z" fill="#c4ccd4" stroke="#6c7b8c" strokeWidth=".8" />
            </svg>
          </SortMark>
          <FileTable>
            <colgroup>
              <NameCol />
              <WideCol />
              <WideCol />
              <SizeCol />
            </colgroup>
            <thead>
              <tr>
                <th>Name</th>
                <th>Date modified</th>
                <th>Type</th>
                <th>Size</th>
              </tr>
            </thead>
            <tbody>
              {files.map(([name, date]) => (
                <tr key={name}>
                  <td>
                    <FileName href="#file">
                      <Folder />
                      {name}
                    </FileName>
                  </td>
                  <td>{date}</td>
                  <td>File folder</td>
                  <td />
                </tr>
              ))}
            </tbody>
          </FileTable>
        </FilePane>
      </Body>
      <DetailsRow>
        6 items
        <ViewButtons>
          <ViewButton $active aria-label="Details view">
            <svg width="16" height="14" viewBox="0 0 16 14" stroke="#3d6478" fill="none">
              <path d="M1.500 1.500h3v2h-3zM1.500 6h3v2h-3zM1.500 10.500h3v2h-3z" fill="#fff" />
              <path d="M6.500 2.500h4M12 2.500h4M6.500 7h4M12 7h4M6.500 11.500h4M12 11.500h4" />
            </svg>
          </ViewButton>
          <ViewButton aria-label="Large icons view">
            <svg width="14" height="12" viewBox="0 0 14 12">
              <path d="M.5.5h13v11H.5z" fill="#fff" stroke="#a0acb4" />
              <path d="M2 2h10v8H2z" fill="#b4dcf2" />
              <path d="M2 4c4 0 5 3 10 3v3H2z" fill="#41606c" />
            </svg>
          </ViewButton>
        </ViewButtons>
      </DetailsRow>
      <StatusBar>
        <StatusCell>6 items (Disk free space: 99.1 GB)</StatusCell>
        <StatusCell $width={88} />
        <PlaceCell $width={152}>
          <SmallComputer />
          Computer
          <svg width="12" height="12" viewBox="0 0 12 12" fill="#a8a8a8" aria-hidden="true">
            <path d="M8 1h2v2H8zM8 4.500h2v2H8zM4.500 4.500h2v2h-2zM8 8h2v2H8zM4.500 8h2v2h-2zM1 8h2v2H1z" />
          </svg>
        </PlaceCell>
      </StatusBar>
    </Client>
  </ExplorerWindow>
);

export default function App() {
  return (
    <>
      <GlobalStyle />
      <Desktop>
        <Wallpaper />
        <IconGrid>
          {shortcuts.map((s) => (
            <Shortcut key={s.label} $column={s.column}>
              <a href="#open">
                {s.icon}
                <span>{s.label}</span>
              </a>
            </Shortcut>
          ))}
        </IconGrid>
        <NotepadWindow aria-label="Notepad">
          <NotepadTitle>Notepad</NotepadTitle>
          <NotepadMenu />
          <NotepadPage />
        </NotepadWindow>
        <Explorer />
        <Taskbar>
          <StartButton aria-label="Start"><WindowsLogo /></StartButton>
          <TaskButton $state="active" aria-label="File Explorer"><ExplorerIcon /></TaskButton>
          <TaskButton $state="open" aria-label="Google Chrome"><ChromeIcon size={32} /></TaskButton>
          <TaskButton aria-label="Opera GX"><OperaIcon size={34} /></TaskButton>
          <TaskButton $state="open" aria-label="Settings"><SettingsIcon /></TaskButton>
          <TaskButton $state="open" aria-label="Notepad"><NotepadIcon /></TaskButton>
          <Tray>
            <FlagIcon />
            <WiredIcon />
            <SoundIcon />
            <Clock>
              1:41 PM
              <br />
              2/4/2022
            </Clock>
          </Tray>
        </Taskbar>
      </Desktop>
    </>
  );
}
